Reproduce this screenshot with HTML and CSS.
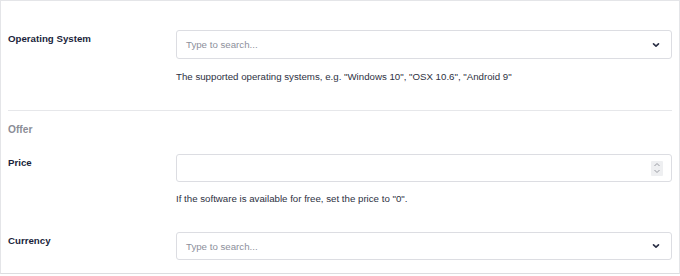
FILE: index.html
```html
<!DOCTYPE html>
<html>
<head>
<meta charset="utf-8">
<link rel="stylesheet" href="styles.css">
</head>
<body>
<div class="panel">
  <div class="row row-os">
    <div class="label">Operating System</div>
    <div class="field">
      <div class="select">
        <span class="placeholder">Type to search...</span>
        <svg class="chev" width="10" height="10" viewBox="0 0 10 10"><path d="M2.5 3.8 L5 6.2 L7.5 3.8" fill="none" stroke="#2a2f45" stroke-width="1.6" stroke-linecap="round" stroke-linejoin="round"/></svg>
      </div>
      <p class="help">The supported operating systems, e.g. "Windows 10", "OSX 10.6", "Android 9"</p>
    </div>
  </div>
  <hr class="sep">
  <div class="section">Offer</div>
  <div class="row row-price">
    <div class="label">Price</div>
    <div class="field">
      <div class="input">
        <span class="spin">
          <svg width="8" height="14" viewBox="0 0 8 14"><path d="M1.5 5 L4 2.5 L6.5 5 M1.5 9 L4 11.5 L6.5 9" fill="none" stroke="#9a9ca3" stroke-width="1"/></svg>
        </span>
      </div>
      <p class="help">If the software is available for free, set the price to "0".</p>
    </div>
  </div>
  <div class="row row-currency">
    <div class="label">Currency</div>
    <div class="field">
      <div class="select">
        <span class="placeholder">Type to search...</span>
        <svg class="chev" width="10" height="10" viewBox="0 0 10 10"><path d="M2.5 3.8 L5 6.2 L7.5 3.8" fill="none" stroke="#2a2f45" stroke-width="1.6" stroke-linecap="round" stroke-linejoin="round"/></svg>
      </div>
    </div>
  </div>
</div>
</body>
</html>
```
FILE: styles.css
```css
* { box-sizing: border-box; }
html, body { margin: 0; padding: 0; background: #fff; }
body {
  font-family: "Liberation Sans", Arial, sans-serif;
  font-size: 9.7px;
  color: #1e2235;
}
.panel {
  width: 680px;
  height: 274px;
  border: 1px solid #e4e5e8;
  border-bottom-color: #dcdde0;
  padding: 0 7px;
}
.row {
  display: grid;
  grid-template-columns: 168px 496px;
}
.row-os { padding-top: 29px; }
.row-price { padding-top: 18px; }
.row-currency { padding-top: 27px; }
.label {
  font-weight: bold;
  font-size: 9.7px;
  color: #1b1f3b;
  padding-top: 3px;
  line-height: 12px;
}
.select, .input {
  height: 29px;
  border: 1px solid #dcdde2;
  border-radius: 3px;
  display: flex;
  align-items: center;
  justify-content: space-between;
  padding: 0 10px 0 9px;
  background: #fff;
}
.input { height: 28px; justify-content: flex-end; padding-right: 8px; }
.row-currency .select { height: 28px; }
.placeholder { color: #8d909b; font-size: 9.7px; }
.chev { display: block; }
.spin {
  width: 12px;
  height: 15px;
  background: #eeeff1;
  border-radius: 1px;
  display: flex;
  align-items: center;
  justify-content: center;
}
.spin svg { display: block; }
.help {
  margin: 12px 0 0;
  font-size: 9.7px;
  line-height: 12px;
  color: #2e3142;
}
.row-price .help { margin-top: 11px; }
.sep {
  border: 0;
  border-top: 1px solid #e6e7ea;
  margin: 27px 0 0;
  height: 0;
}
.section {
  margin-top: 13px;
  font-weight: bold;
  font-size: 10.2px;
  line-height: 12px;
  color: #8b8d96;
}
```
